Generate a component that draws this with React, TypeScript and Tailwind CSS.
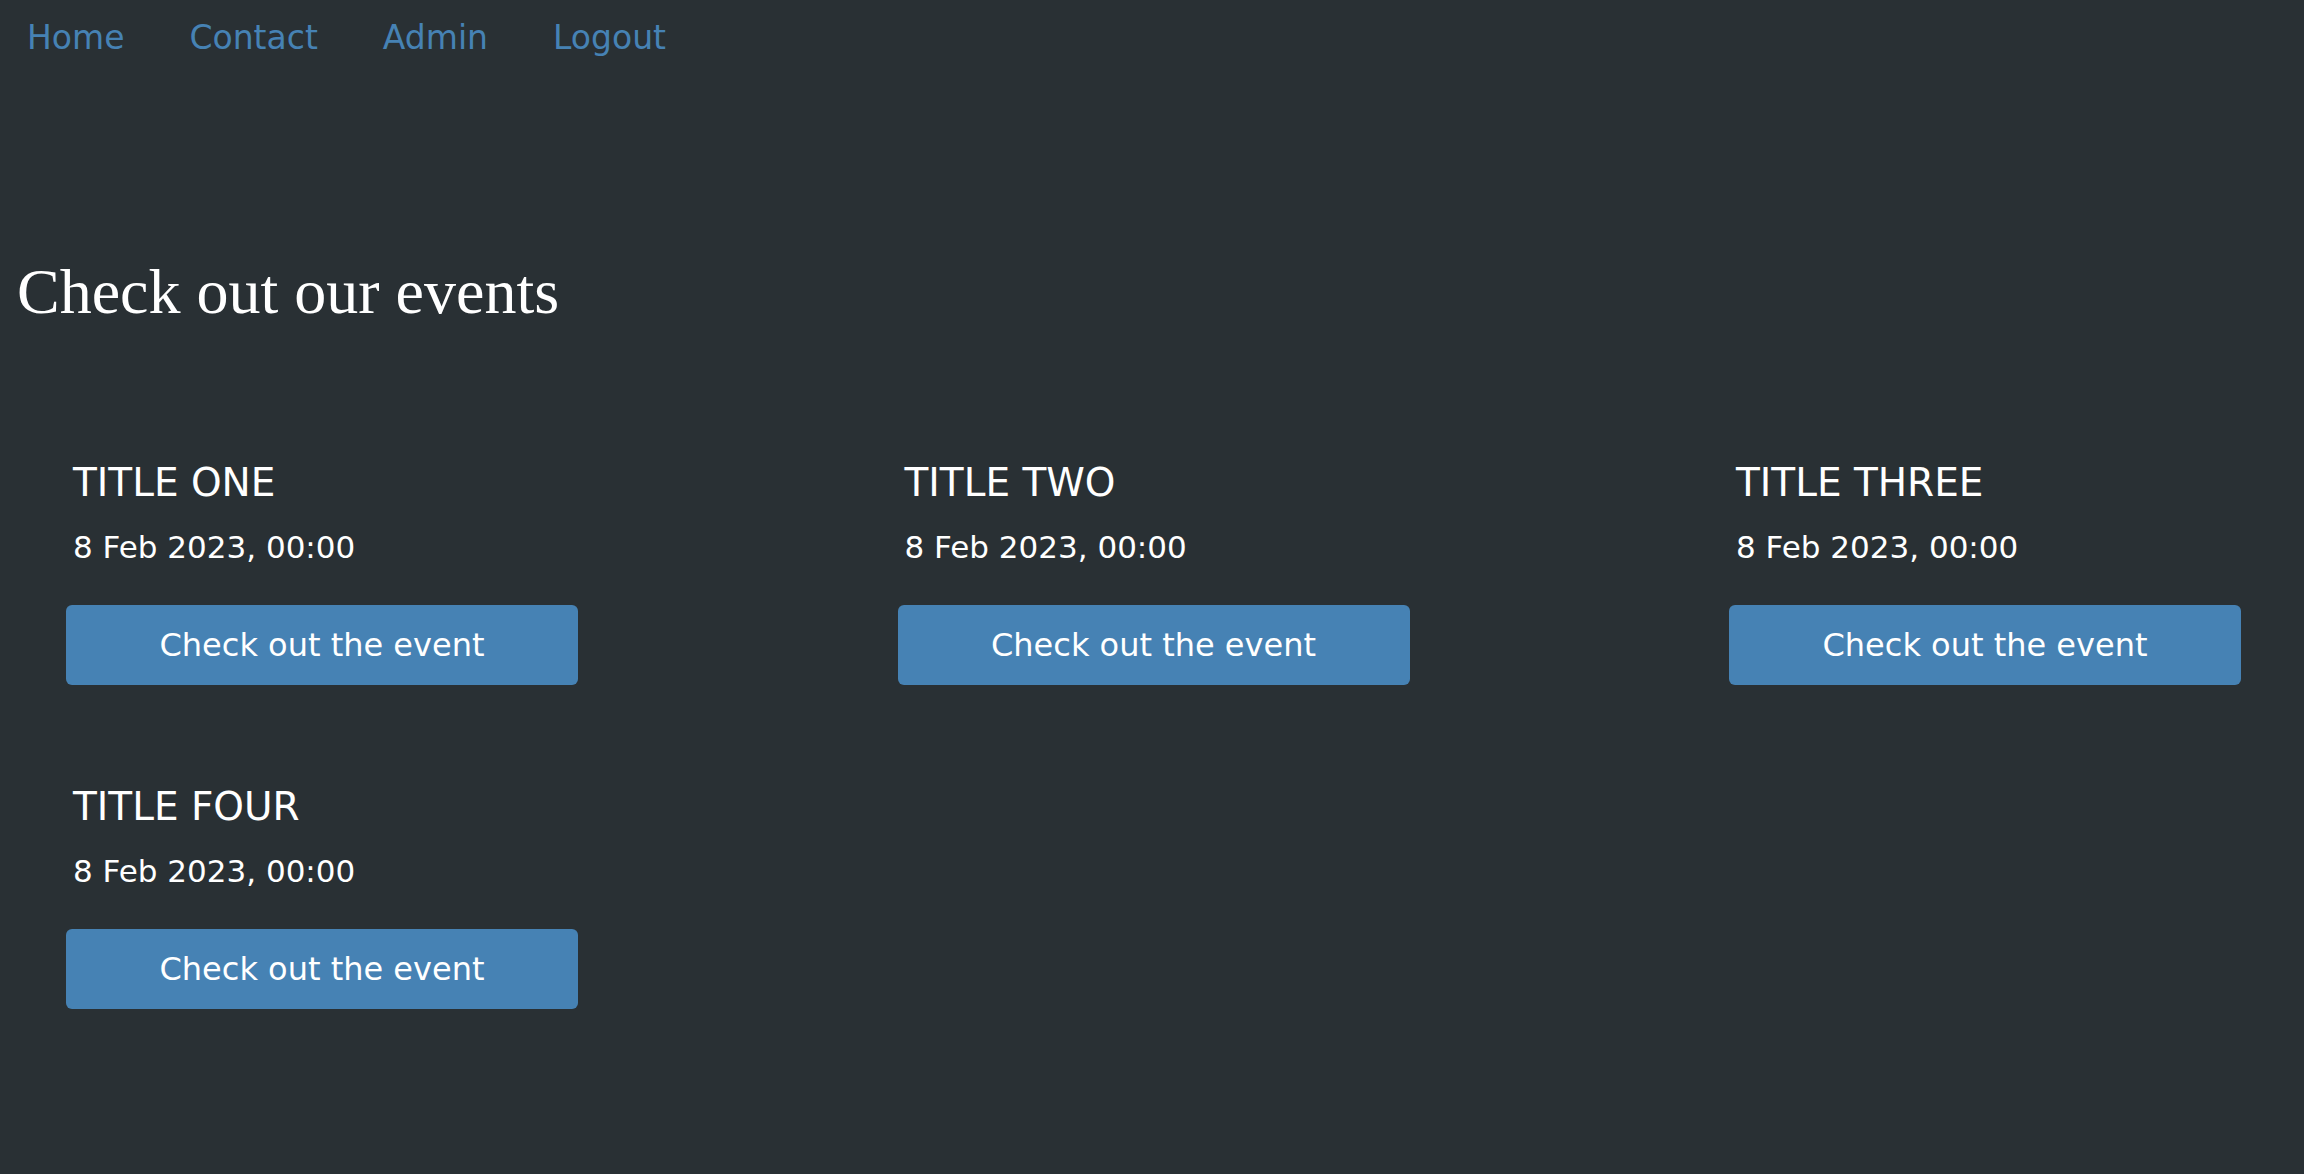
import React from "react";

const events = [
  { title: "TITLE ONE", date: "8 Feb 2023, 00:00" },
  { title: "TITLE TWO", date: "8 Feb 2023, 00:00" },
  { title: "TITLE THREE", date: "8 Feb 2023, 00:00" },
  { title: "TITLE FOUR", date: "8 Feb 2023, 00:00" },
];

function EventCard({ title, date }: { title: string; date: string }) {
  return (
    <div className="w-[512px] h-[324px] flex flex-col">
      <h3 className="pl-[7px] text-[39px] leading-[48px] font-normal text-white">
        {title}
      </h3>
      <p className="pl-[7px] mt-[20px] text-[31px] leading-[40px] text-white">
        {date}
      </p>
      <button className="mt-[38px] h-[80px] w-full rounded-[6px] bg-[#4682b4] text-[32px] text-white">
        Check out the event
      </button>
    </div>
  );
}

export default function App() {
  return (
    <div className="min-h-screen bg-[#293034] font-['DejaVu_Sans',sans-serif]">
      <nav className="flex gap-[65px] pl-[27px] pt-[14px]">
        {["Home", "Contact", "Admin", "Logout"].map((item) => (
          <a
            key={item}
            href=""
            className="text-[33px] leading-[48px] text-[#4682b4]"
          >
            {item}
          </a>
        ))}
      </nav>

      <h1 className="mt-[193px] pl-[17px] font-['Liberation_Serif',serif] text-[64px] leading-[74px] font-normal text-white">
        Check out our events
      </h1>

      <div className="mt-[130px] pl-[66px] pr-[63px] grid grid-cols-[512px_512px_512px] justify-between">
        {events.map((e) => (
          <EventCard key={e.title} title={e.title} date={e.date} />
        ))}
      </div>
    </div>
  );
}
